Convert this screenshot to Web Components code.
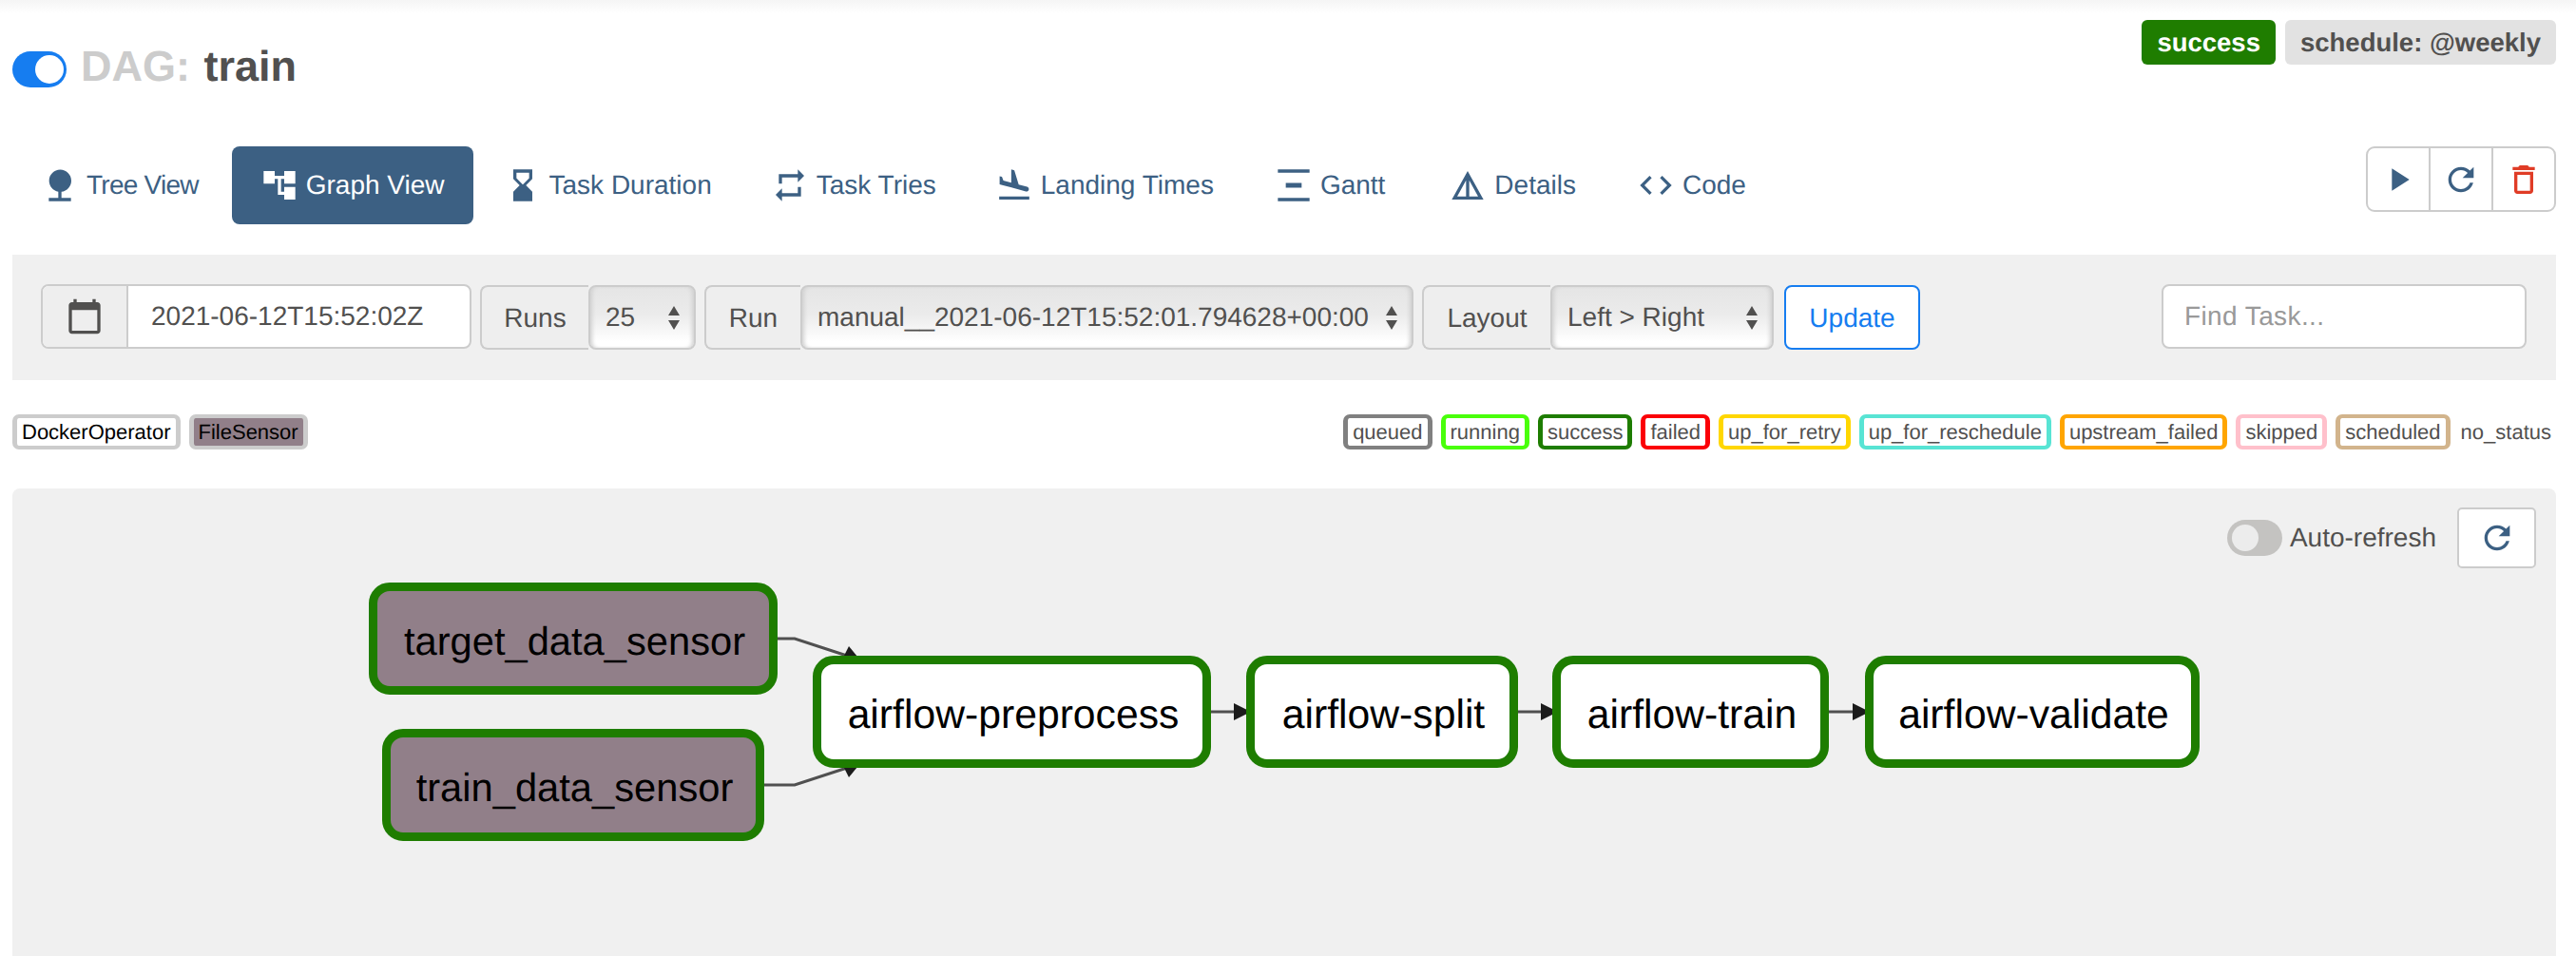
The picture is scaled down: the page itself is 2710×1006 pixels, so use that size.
<!DOCTYPE html>
<html><head><meta charset="utf-8"><title>DAG: train</title>
<style>
html,body{margin:0;padding:0;background:#fff;overflow:hidden}
body{font-family:"Liberation Sans",Arial,sans-serif;color:#51504f;width:2710px;height:1006px;text-rendering:geometricPrecision}
</style></head>
<body>
<dag-page>
  <dag-header>
    <dag-title slot="title" name="train"></dag-title>
    <dag-badge slot="badges" kind="state">success</dag-badge>
    <dag-badge slot="badges">schedule: @weekly</dag-badge>
  </dag-header>
  <dag-nav>
    <nav-tab icon="nature" style="letter-spacing:-.75px;margin-right:3px">Tree View</nav-tab>
    <nav-tab icon="tree" active>Graph View</nav-tab>
    <nav-tab icon="hourglass">Task Duration</nav-tab>
    <nav-tab icon="repeat">Task Tries</nav-tab>
    <nav-tab icon="land">Landing Times</nav-tab>
    <nav-tab icon="gantt" style="margin-left:2px">Gantt</nav-tab>
    <nav-tab icon="details" style="margin-left:5px">Details</nav-tab>
    <nav-tab icon="code" style="margin-left:2px">Code</nav-tab>
    <action-group slot="actions"></action-group>
  </dag-nav>
  <filter-bar>
    <date-field value="2021-06-12T15:52:02Z"></date-field>
    <addon-select label="Runs" lw="114" value="25" width="113"></addon-select>
    <addon-select label="Run" lw="101" value="manual__2021-06-12T15:52:01.794628+00:00" width="645"></addon-select>
    <addon-select label="Layout" lw="135" value="Left &gt; Right" width="235"></addon-select>
    <update-button>Update</update-button>
    <find-input slot="end" placeholder="Find Task..."></find-input>
  </filter-bar>
  <legend-row>
    <legend-chip kind="op" border="#cccccc" fill="#ffffff" color="#000">DockerOperator</legend-chip>
    <legend-chip kind="op" border="#cccccc" fill="#917f89" color="#000">FileSensor</legend-chip>
    <legend-chip slot="states" border="#808080">queued</legend-chip>
    <legend-chip slot="states" border="#49ff0b">running</legend-chip>
    <legend-chip slot="states" border="#1e7d00">success</legend-chip>
    <legend-chip slot="states" border="#fb0007">failed</legend-chip>
    <legend-chip slot="states" border="#ffd700">up_for_retry</legend-chip>
    <legend-chip slot="states" border="#58e4d4">up_for_reschedule</legend-chip>
    <legend-chip slot="states" border="#ffa500">upstream_failed</legend-chip>
    <legend-chip slot="states" border="#ffc0cb">skipped</legend-chip>
    <legend-chip slot="states" border="#d2b48c">scheduled</legend-chip>
    <legend-chip slot="states" border="transparent" fill="transparent" style="padding:0;border-width:4px 0;margin-left:2px">no_status</legend-chip>
  </legend-row>
  <graph-panel>
    <graph-node style="left:375px;top:99px;width:430px;height:118px;font-size:41.7px" fill="#917f89">target_data_sensor</graph-node>
    <graph-node style="left:389px;top:253px;width:402px;height:118px;font-size:41.7px" fill="#917f89">train_data_sensor</graph-node>
    <graph-node style="left:842px;top:176px;width:419px;height:118px">airflow-preprocess</graph-node>
    <graph-node style="left:1298px;top:176px;width:286px;height:118px">airflow-split</graph-node>
    <graph-node style="left:1620px;top:176px;width:291px;height:118px">airflow-train</graph-node>
    <graph-node style="left:1949px;top:176px;width:352px;height:118px">airflow-validate</graph-node>
  </graph-panel>
</dag-page>
<script>
const ICONS={
 nature:"M13 16.12c3.47-.41 6.2-3.36 6.2-6.95 0-3.87-3.13-7-7-7s-7 3.13-7 7c0 3.47 2.52 6.34 5.8 6.89V20H5v2h14v-2h-6v-3.88z",
 tree:"M22 11V3h-7v3H9V3H2v8h7V8h2v10h4v3h7v-8h-7v3h-2V8h2v3z",
 hourglass:"M18 22l-.01-6L14 12l3.99-4.01L18 2H6v6l4 4-4 3.99V22h12zM8 7.5V4h8v3.5l-4 4-4-4z",
 repeat:"M7 7h10v3l4-4-4-4v3H5v6h2V7zm10 10H7v-3l-4 4 4 4v-3h12v-6h-2v4z",
 land:"M2.5 19h19v2h-19v-2zm7.18-5.73l4.35 1.16 5.31 1.42c.8.21 1.62-.26 1.84-1.06.21-.8-.26-1.62-1.06-1.84l-5.31-1.42-2.76-9.02L10.12 2v8.28L5.15 8.95l-.93-2.32-1.45-.39v5.17l1.6.43 5.31 1.43z",
 gantt:"M22 2v2H2V2h20zM7 10.5v3h10v-3H7zM2 20v2h20v-2H2z",
 details:"M12 3L2 21h20L12 3zm1 5.92L18.6 19H13V8.92zm-2 0V19H5.4L11 8.92z",
 code:"M9.4 16.6L4.8 12l4.6-4.6L8 6l-6 6 6 6 1.4-1.4zm5.2 0l4.6-4.6-4.6-4.6L16 6l6 6-6 6-1.4-1.4z",
 play:"M8 5v14l11-7z",
 refresh:"M17.65 6.35C16.2 4.9 14.21 4 12 4c-4.42 0-7.99 3.58-7.99 8s3.57 8 7.99 8c3.73 0 6.84-2.55 7.73-6h-2.08c-.82 2.33-3.04 4-5.65 4-3.31 0-6-2.69-6-6s2.69-6 6-6c1.66 0 3.14.69 4.22 1.78L13 11h7V4l-2.35 2.35z",
 trash:"M6 19c0 1.1.9 2 2 2h8c1.1 0 2-.9 2-2V7H6v12zM8 9h8v10H8V9zm7.5-5l-1-1h-5l-1 1H5v2h14V4h-3.5z",
 calendar:"M20 3h-1V1h-2v2H7V1H5v2H4c-1.1 0-2 .9-2 2v16c0 1.1.9 2 2 2h16c1.1 0 2-.9 2-2V5c0-1.1-.9-2-2-2zm0 18H4V8h16v13z"
};
const svgIcon=(n,c="currentColor",s=40)=>`<svg width="${s}" height="${s}" viewBox="0 0 24 24" fill="${c}" style="display:block;flex:none"><path d="${ICONS[n]}"/></svg>`;
const el=(name,render)=>customElements.define(name,class extends HTMLElement{
  constructor(){super();this.attachShadow({mode:"open"})}
  connectedCallback(){this.shadowRoot.innerHTML=render(this)}
});
const a=(e,k,d="")=>e.hasAttribute(k)?e.getAttribute(k):d;

el("dag-page",()=>`<style>:host{display:flex;flex-direction:column;height:1006px;box-sizing:border-box;padding:0 21px 0 13px;background:linear-gradient(#f5f5f5,#fff 14px) no-repeat;overflow:hidden}</style><slot></slot>`);
el("dag-header",()=>`<style>:host{display:flex;justify-content:space-between;align-items:flex-start;height:154px;flex:none}
 .b{display:flex;gap:10px;margin-top:21px}.t{margin-top:41px}</style>
 <div class="t"><slot name="title"></slot></div><div class="b"><slot name="badges"></slot></div>`);
el("dag-title",e=>`<style>:host{display:flex;align-items:center;gap:15px}
 .sw{width:57px;height:38px;box-sizing:border-box;border-radius:19px;background:#167df0;display:flex;justify-content:flex-end;align-items:center;padding-right:3px;margin-top:6px}
 .k{width:30px;height:30px;border-radius:50%;background:#fff}
 h1{margin:0;font:bold 45px/58px "Liberation Sans",Arial,sans-serif;color:#51504f;white-space:nowrap}
 span{color:#ccc;margin-right:2px}</style>
 <div class="sw"><div class="k"></div></div><h1><span>DAG:</span> ${a(e,"name")}</h1>`);
el("dag-badge",e=>{const s=a(e,"kind")=="state";return `<style>:host{display:block;height:47px;box-sizing:border-box;padding:0 16px;border-radius:6px;font:bold 27.5px/47px "Liberation Sans",Arial,sans-serif;white-space:nowrap;background:${s?"#1f7d00":"#e2e2e2"};color:${s?"#fff":"#51504f"}}</style><slot></slot>`});
el("dag-nav",()=>`<style>:host{display:flex;align-items:flex-start;height:114px;flex:none}
 .s{flex:1;display:flex;gap:2px}</style><div class="s"><slot></slot></div><slot name="actions"></slot>`);
el("nav-tab",e=>{const on=e.hasAttribute("active");return `<style>:host{display:flex;align-items:center;gap:8px;height:82px;box-sizing:border-box;padding:0 30px;border-radius:8px;font-size:28px;white-space:nowrap;background:${on?"#3c6083":"transparent"};color:${on?"#fff":"#3c6083"}}</style>${svgIcon(a(e,"icon"))}<slot></slot>`});
el("action-group",()=>`<style>:host{display:flex;height:69px;box-sizing:border-box;width:200px;border:2px solid #ccc;border-radius:9px;background:#fff}
 div{flex:1;display:flex;align-items:center;justify-content:center}div+div{border-left:2px solid #ccc}</style>
 <div>${svgIcon("play","#3c6083")}</div><div>${svgIcon("refresh","#3c6083")}</div><div>${svgIcon("trash","#e03c26")}</div>`);
el("filter-bar",()=>`<style>:host{display:flex;align-items:center;height:132px;flex:none;box-sizing:border-box;padding:0 31px 0 30px;background:#f0f0f0}
 .s{flex:1;display:flex;align-items:center}</style><div class="s"><slot></slot></div><slot name="end"></slot>`);
el("date-field",e=>`<style>:host{display:flex;height:68px;width:453px;box-sizing:border-box;margin-top:-2px;border:2px solid #ccc;border-radius:8px;overflow:hidden;font-size:28px;background:#fff}
 .i{width:90px;flex:none;box-sizing:border-box;border-right:2px solid #ccc;background:#eee;display:flex;align-items:center;justify-content:center;color:#51504f}
 .v{padding-left:24px;line-height:64px}</style><div class="i">${svgIcon("calendar")}</div><div class="v">${a(e,"value")}</div>`);
el("addon-select",e=>`<style>:host{display:flex;height:68px;margin-left:9px;font-size:28px}
 .l{box-sizing:border-box;width:${a(e,"lw")}px;text-align:center;line-height:66px;border:2px solid #ccc;border-right:0;border-radius:8px 0 0 8px;background:#eee}
 .v{box-sizing:border-box;width:${a(e,"width")}px;padding:0 14px 0 16px;border:2px solid #ccc;border-radius:8px;display:flex;align-items:center;justify-content:space-between;white-space:nowrap;
 background:linear-gradient(#e5e5e5,#ebebeb 45%,#fff 90%);box-shadow:inset 4px 0 4px -2px #d0d0d0,inset -4px 0 4px -2px #d0d0d0}
 span{margin-top:-1px}</style><div class="l">${a(e,"label")}</div><div class="v"><span>${a(e,"value")}</span>
 <svg width="14" height="25" viewBox="0 0 14 25" fill="#51504f" style="flex:none"><path d="M7 0l6 10H1zM7 25l-6-10h12z"/></svg></div>`);
el("update-button",()=>`<style>:host{display:block;height:68px;box-sizing:border-box;margin-left:11px;width:143px;text-align:center;border:2px solid #167df0;border-radius:8px;background:#fff;color:#167df0;font-size:28px;line-height:66px}</style><slot></slot>`);
el("find-input",e=>`<style>:host{display:block;height:68px;width:384px;box-sizing:border-box;margin-top:-2px;border:2px solid #ccc;border-radius:8px;background:#fff;color:#999;font-size:28px;letter-spacing:.4px;line-height:64px;padding-left:22px}</style>${a(e,"placeholder")}`);
el("legend-row",()=>`<style>:host{display:flex;justify-content:space-between;align-items:center;flex:none;height:37px;margin-top:36px;margin-bottom:41px}
 .g{display:flex;gap:9px}</style><div class="g"><slot></slot></div><div class="g" style="margin-right:5px"><slot name="states"></slot></div>`);
el("legend-chip",e=>`<style>:host{display:block;height:37px;box-sizing:border-box;padding:0 5px;border:4px solid ${a(e,"border")};border-width:4px 5px;border-radius:7px;background:${a(e,"fill","#fff")};color:${a(e,"color","#51504f")};font-size:22px;line-height:29px;white-space:nowrap}</style><slot></slot>`);
el("graph-panel",()=>`<style>:host{display:block;position:relative;flex:1;background:#f0f0f0;border-radius:8px 8px 0 0;overflow:hidden}
 .top{display:flex;justify-content:flex-end;align-items:center;height:64px;margin:20px 21px 0 0}
 .sw{width:58px;height:38px;box-sizing:border-box;border-radius:19px;background:#c4c3c1;padding:5px 0 0 5px}
 .k{width:28px;height:28px;border-radius:50%;background:#ececec}
 .t{font-size:28px;margin:0 22px 0 8px}
 .btn{width:83px;height:64px;box-sizing:border-box;border:2px solid #ccc;border-radius:5px;background:#fff;display:flex;align-items:center;justify-content:center}
 svg.e{position:absolute;left:-13px;top:-514px;width:2710px;height:1006px}
 </style>
 <div class="top"><div class="sw"><div class="k"></div></div><div class="t">Auto-refresh</div><div class="btn">${svgIcon("refresh","#3c6083")}</div></div>
 <svg class="e" viewBox="0 0 2710 1006"><g fill="none" stroke="#505050" stroke-width="3">
 <path d="M818 672H836L891 690"/><path d="M804 826H836L891 808"/><path d="M1274 749H1300"/><path d="M1597 749H1623"/><path d="M1924 749H1950"/></g>
 <g fill="#1c1c1c"><path d="M893 680L885 696L907 697z"/><path d="M893 818L885 802L907 801z"/><path d="M1298 740V758L1316 749z"/><path d="M1621 740V758L1639 749z"/><path d="M1949 740V758L1967 749z"/></g></svg>
 <slot></slot>`);
el("graph-node",e=>`<style>:host{display:flex;position:absolute;box-sizing:border-box;align-items:center;justify-content:center;border:9px solid #1e7d00;border-radius:22px;background:${a(e,"fill","#fff")};color:#000;font-size:42.7px;white-space:nowrap}
 span{margin:6px 0 0 3px}</style><span><slot></slot></span>`);
</script>
</body></html>
